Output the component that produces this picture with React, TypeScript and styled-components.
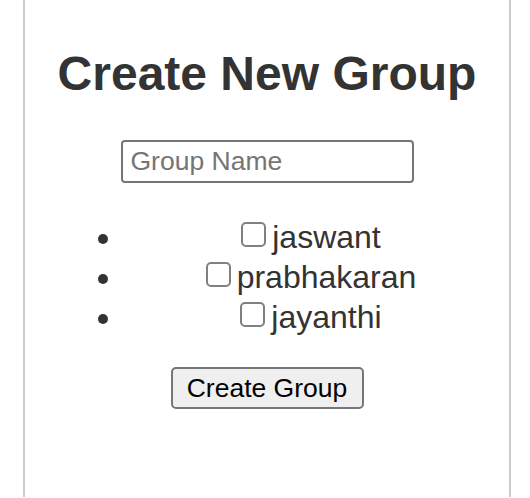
import React from "react";
import styled, { createGlobalStyle } from "styled-components";

const Global = createGlobalStyle`
  html, body { margin: 0; padding: 0; background: #ffffff; }
  body { font-family: "Liberation Sans", Arial, Helvetica, sans-serif; color: #333333; }
`;

const Panel = styled.div`
  box-sizing: border-box;
  margin-left: 23px;
  width: 488px;
  height: 497px;
  border-left: 2px solid #cccccc;
  border-right: 2px solid #cccccc;
  display: flex;
  flex-direction: column;
  align-items: center;
  padding-top: 46px;
`;

const Title = styled.h1`
  margin: 0;
  font-size: 48px;
  line-height: 55px;
  font-weight: 700;
  color: #333333;
`;

const NameInput = styled.input`
  box-sizing: border-box;
  margin-top: 39px;
  width: 293px;
  height: 43px;
  padding: 2px 8px;
  border: 2px solid #767676;
  border-radius: 4px;
  font-family: "Liberation Sans", Arial, sans-serif;
  font-size: 26.5px;
  color: #000000;
  background: #ffffff;
  outline: none;
  &::placeholder { color: #757575; }
`;

const MemberList = styled.ul`
  align-self: stretch;
  margin: 34px 0 0 0;
  padding: 0 19px 0 99px;
  list-style: disc outside;
  font-size: 32px;
  color: #333333;
`;

const Member = styled.li`
  text-align: center;
  line-height: 40px;
  height: 40px;
`;

const Check = styled.input`
  appearance: none;
  -webkit-appearance: none;
  box-sizing: border-box;
  width: 25px;
  height: 25px;
  margin: 0 6px 0 8px;
  border: 2px solid #808080;
  border-radius: 5px;
  background: #ffffff;
  vertical-align: 1px;
`;

const SubmitButton = styled.button`
  box-sizing: border-box;
  margin-top: 30px;
  width: 193px;
  height: 42px;
  padding: 0;
  border: 2px solid #767676;
  border-radius: 5px;
  background: #efefef;
  color: #000000;
  font-family: "Liberation Sans", Arial, sans-serif;
  font-size: 26.5px;
`;

const members = ["jaswant", "prabhakaran", "jayanthi"];

export default function App() {
  return (
    <>
      <Global />
      <Panel>
        <Title>Create New Group</Title>
        <NameInput type="text" placeholder="Group Name" />
        <MemberList>
          {members.map((m) => (
            <Member key={m}>
              <Check type="checkbox" />
              {m}
            </Member>
          ))}
        </MemberList>
        <SubmitButton>Create Group</SubmitButton>
      </Panel>
    </>
  );
}
